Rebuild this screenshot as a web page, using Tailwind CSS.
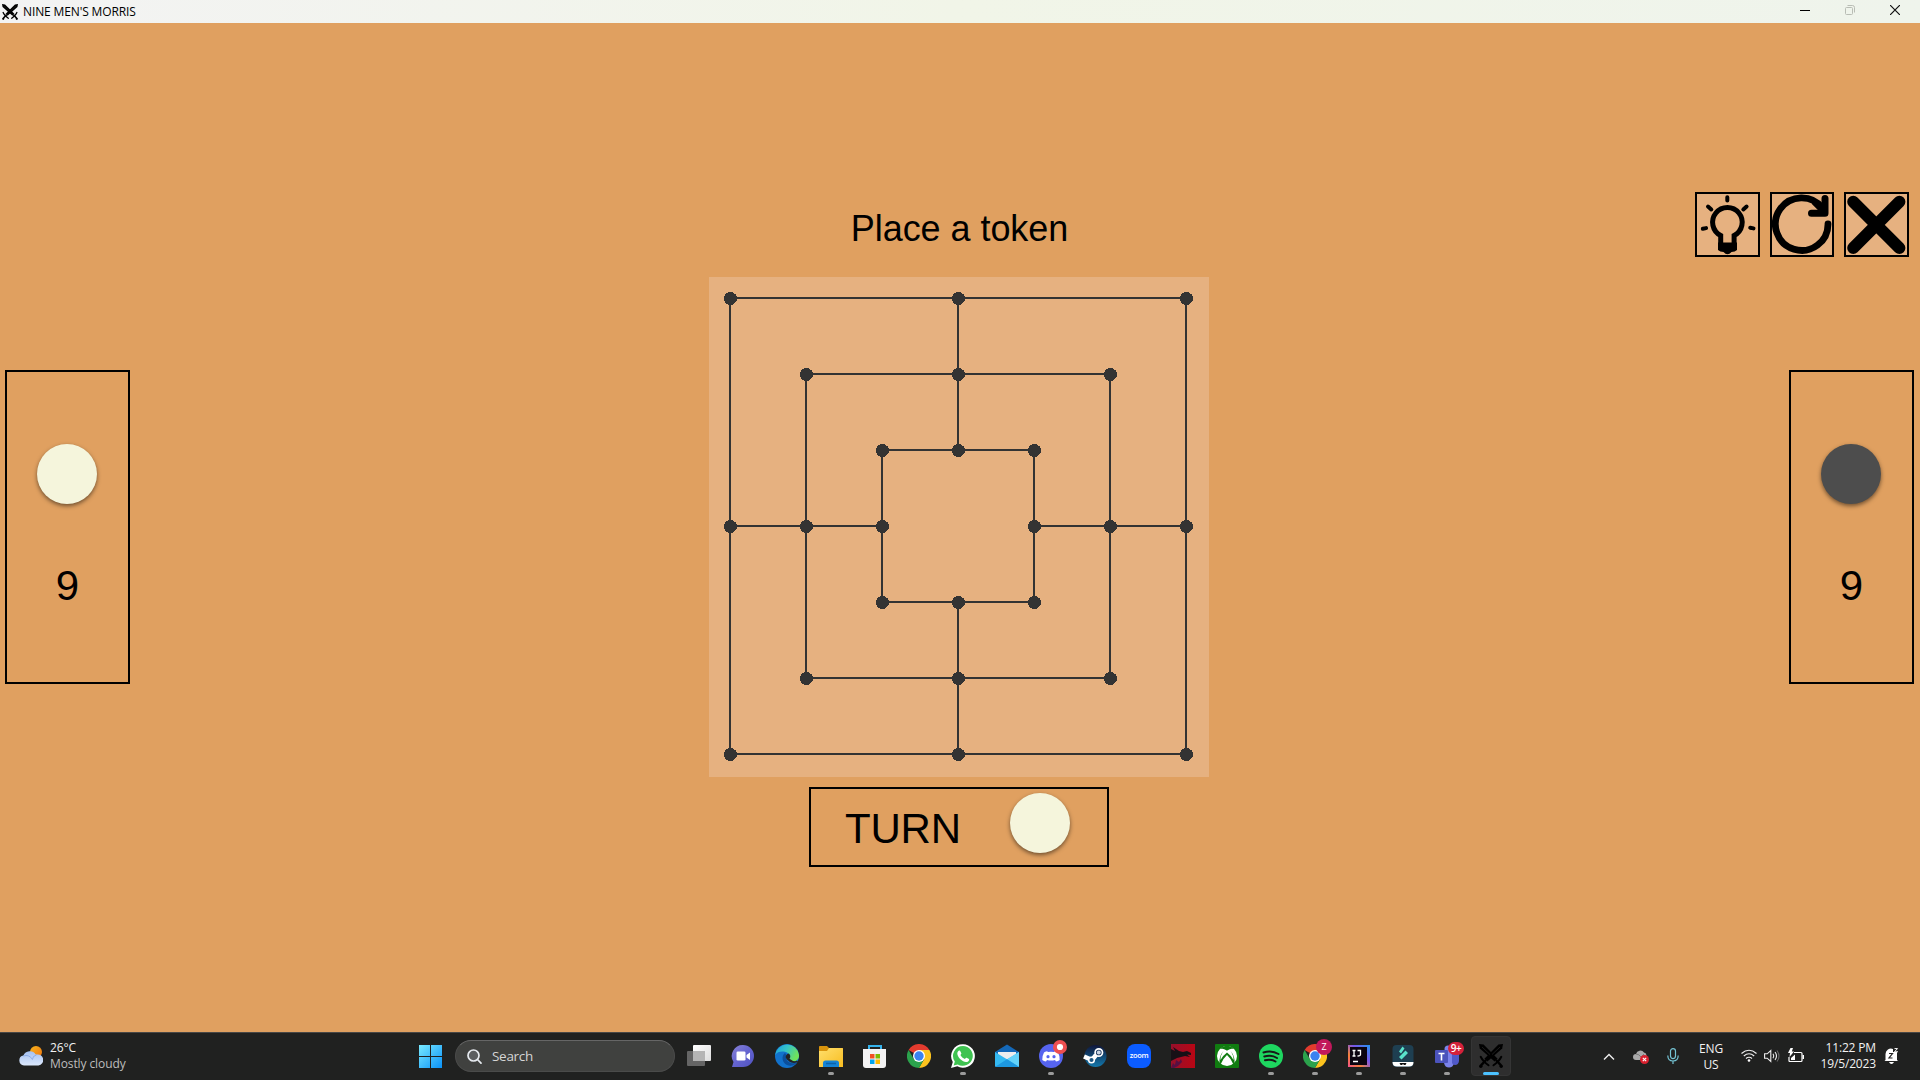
<!DOCTYPE html>
<html lang="en">
<head>
<meta charset="utf-8">
<title>Nine Men's Morris</title>
<script src="https://cdn.jsdelivr.net/npm/@tailwindcss/browser@4"></script>
</head>
<body class="w-[1920px] h-[1080px] overflow-hidden flex flex-col bg-[#e0a060] text-black font-['Liberation_Sans',Arial,sans-serif]">
<svg class="hidden">
  <defs>
    <g id="sword">
      <path d="M0 0l4.600.6L18.600 14.800l-3 2.800L.8 4.600z"/>
      <path d="M22.300 12.800q-1.200 2.400-3.200 4.600-2.200 2.200-4.600 3.900" fill="none" stroke="#000" stroke-width="2" stroke-linecap="round"/>
      <path d="M17 16l5 5.400" stroke="#000" stroke-width="2.400"/>
      <circle cx="22.200" cy="22.200" r="1.700"/>
    </g>
    <symbol id="swords" viewBox="0 0 24 24">
      <use href="#sword"/>
      <use href="#sword" transform="matrix(-1 0 0 1 24 0)"/>
      <path d="M3 3l8 7.500M21 3l-8 7.500" stroke="#666" stroke-width=".5" opacity=".6"/>
    </symbol>
    <symbol id="chrome" viewBox="0 0 24 24">
      <path d="M12 12L1.600 6A12 12 0 0 1 22.400 6z" fill="#e33b2e"/>
      <path d="M12 6h10.400A12 12 0 0 1 12 24l5.200-9z" fill="#fcc31e"/>
      <path d="M1.600 6A12 12 0 0 0 12 24l5.200-9L12 12 6.800 15z" fill="#2ba24c"/>
      <circle cx="12" cy="12" r="6" fill="#fff"/>
      <circle cx="12" cy="12" r="4.700" fill="#3b82f0"/>
    </symbol>
  </defs>
</svg>

<header class="h-[23px] shrink-0 flex items-center justify-between pl-0.5 bg-linear-to-r from-[#f3f3f3] via-[#f1f5e8] to-[#eff4ec]">
  <div class="flex items-center gap-[5px]">
    <svg class="size-4"><use href="#swords"/></svg>
    <span class="font-['Open_Sans','Noto_Sans',sans-serif] text-[12px] leading-4 tracking-[-0.130px]">NINE MEN'S MORRIS</span>
  </div>
  <div class="flex items-center pr-5 pb-[3px] gap-[35px]">
    <svg class="w-2.5 h-2.5" viewBox="0 0 10 10"><path d="M0 5.500h10" stroke="#000"/></svg>
    <svg class="w-2.5 h-2.5" viewBox="0 0 10 10" fill="none" stroke="#b9bdb5"><rect x=".5" y="2.500" width="7" height="7" rx="1"/><path d="M2.500.5h5a2 2 0 0 1 2 2v5"/></svg>
    <svg class="w-2.5 h-2.5" viewBox="0 0 10 10"><path d="M0 0l10 10M10 0L0 10" stroke="#111" stroke-width="1.200"/></svg>
  </div>
</header>

<main class="h-[1009px] shrink-0 flex justify-between">
  <aside class="w-[280px] pl-[5px] pt-[347px]">
    <div class="w-[125px] h-[314px] border-2 border-black flex flex-col items-center pt-[72px] pr-px">
      <div class="size-[60px] rounded-full bg-[#f5f5dc] shadow-[0_2px_4px_rgba(0,0,0,0.5)]"></div>
      <div class="mt-[58px] pl-px text-[42px] leading-[48px]">9</div>
    </div>
  </aside>

  <section class="w-[500px] pt-[169px] -ml-[2px] flex flex-col items-center">
    <h1 class="h-[85px] pt-4 pl-px text-[36px] leading-[42px] tracking-[-0.050px]">Place a token</h1>
    <svg class="w-[500px] h-[500px] shrink-0 bg-[#e6b180]" viewBox="0 0 500 500" shape-rendering="crispEdges">
      <g fill="none" stroke="#333" stroke-width="2">
        <rect x="21" y="21" width="456" height="456"/>
        <rect x="97" y="97" width="304" height="304"/>
        <rect x="173" y="173" width="152" height="152"/>
        <path d="M249 21v152M249 325v152M21 249h152M325 249h152"/>
      </g>
      <g id="nodes" fill="#333"></g>
    </svg>
    <div class="mt-2.5 w-[300px] h-20 shrink-0 border-2 border-black flex justify-between pl-[34px] pr-[37px]">
      <span class="mt-4 text-[42px] leading-[48px] tracking-[-0.200px]">TURN</span>
      <div class="mt-1 size-[60px] rounded-full bg-[#f5f5dc] shadow-[0_2px_4px_rgba(0,0,0,0.5)]"></div>
    </div>
  </section>

  <aside class="w-[280px] flex flex-col items-end pt-[169px]">
    <div class="flex gap-2.5 pr-[11px] h-[65px]">
      <button class="w-[65px] border-2 border-black bg-[#e6b180]">
        <svg class="size-[61px]" viewBox="0 0 61 61">
          <g stroke="#000" stroke-width="4" stroke-linecap="round" fill="none">
            <path d="M30.300 3.300v3.200M11 12.500l3.300 3M49.600 12.500l-3.300 3M5.800 34.800l3.300-.7M56.500 34.400l-3.300-.7"/>
          </g>
          <path d="M23.700 50V41.500A14.800 14.800 0 1 1 37.100 41.500V50" fill="none" stroke="#000" stroke-width="5"/>
          <path d="M21 48.500h19v7.500q-2 2-5.500 2-4 4.500-8 0-3.500 0-5.500-2z"/>
        </svg>
      </button>
      <button class="w-16 border-2 border-black bg-[#e6b180]">
        <svg class="w-[60px] h-[61px]" viewBox="0 0 60 61" fill="none" stroke="#000" stroke-linejoin="round" stroke-linecap="round">
          <path d="M56 29.800A26.300 26.300 0 1 1 50.500 14" stroke-width="6.800"/>
          <path d="M53 4.500v14.800H39.500" stroke-width="7"/>
          <path d="M43 9l9 9" stroke-width="6"/>
        </svg>
      </button>
      <button class="w-[65px] border-2 border-black bg-[#e6b180]">
        <svg class="size-[61px]" viewBox="0 0 61 61"><path d="M7.200 7.700l46.200 46.200M53.400 7.700L7.200 53.900" stroke="#000" stroke-width="12" stroke-linecap="round"/></svg>
      </button>
    </div>
    <div class="mt-[113px] mr-1.5 w-[125px] h-[314px] border-2 border-black flex flex-col items-center pt-[72px] pl-px pr-[2px]">
      <div class="size-[60px] rounded-full bg-[#4d4d4d] shadow-[0_2px_4px_rgba(0,0,0,0.5)]"></div>
      <div class="mt-[58px] pl-px text-[42px] leading-[48px]">9</div>
    </div>
  </aside>
</main>

<footer class="h-12 shrink-0 flex bg-[#202120] border-t border-[#484746] text-[#f2f2f2] font-['Open_Sans','Noto_Sans',sans-serif]">
  <div class="w-[419px] pl-[19px] flex gap-[7px]">
    <svg class="mt-3 w-6 h-6" viewBox="0 0 24 24">
      <defs><linearGradient id="cl" x2="0" y2="1"><stop stop-color="#a4c1f2"/><stop offset="1" stop-color="#dce8fb"/></linearGradient><linearGradient id="su" x2="1" y2="1"><stop stop-color="#f8b51c"/><stop offset="1" stop-color="#ee7310"/></linearGradient></defs>
      <circle cx="17" cy="7" r="6" fill="url(#su)"/>
      <path d="M5 20.500a5 5 0 0 1-.6-9.900A7 7 0 0 1 16.700 9.500a6 6 0 0 1 1.300 0 5.500 5.500 0 0 1 1.500 11z" fill="url(#cl)"/>
      <path d="M4.400 11a7 7 0 0 1 9 3.500 5 5 0 0 1 4-4.500" fill="none" stroke="#86a8e6" stroke-width=".9"/>
    </svg>
    <div class="pt-[7px] text-[12px] leading-4 tracking-[-0.100px]"><div>26°C</div><div class="text-[#bdbdbd]">Mostly cloudy</div></div>
  </div>
  <svg class="mt-3 w-[23px] h-[23px]" viewBox="0 0 23 23"><defs><linearGradient id="win" x2="1" y2="1"><stop stop-color="#79eaff"/><stop offset="1" stop-color="#0a91f7"/></linearGradient></defs><path fill="url(#win)" d="M0 0h11v11H0zM12 0h11v11H12zM0 12h11v11H0zM12 12h11v11H12z"/></svg>
  <div class="ml-[13px] mt-[7px] w-[220px] h-8 rounded-full bg-[#40413f] border border-[#4a4b4a] border-t-[#666] flex items-center gap-2.5 pl-[11px]">
    <svg class="size-[15px]" viewBox="0 0 15 15" fill="none" stroke="#e6eaef" stroke-width="1.700" stroke-linecap="round"><circle cx="6.500" cy="6.500" r="5.500" fill="#5b5e60"/><path d="M10.500 10.500l3.500 3.700"/></svg>
    <span class="text-[13.500px] leading-5 tracking-[-0.300px] text-[#d5d5d5]">Search</span>
  </div>

  <nav class="ml-0.5 flex [&>div]:w-11 [&>div]:h-[47px] [&>div]:flex [&>div]:flex-col [&>div]:items-center [&>div]:pt-[11px] [&>div]:relative [&_i]:mt-1 [&_i]:w-1.5 [&_i]:h-[3px] [&_i]:rounded-full [&_i]:bg-[#9b9b9b]">
    <div><svg class="size-6" viewBox="0 0 24 24"><defs><linearGradient id="tv" x2="1" y2="1"><stop stop-color="#fff"/><stop offset="1" stop-color="#ddd"/></linearGradient></defs><rect y="7" width="18" height="15" rx="1" fill="#656565"/><rect x="6" y="1" width="18" height="16" rx="1" fill="url(#tv)"/><path d="M6 7h12v10H6z" fill="#b5b5b5"/></svg></div>
    <div><svg class="size-6" viewBox="0 0 24 24"><defs><linearGradient id="ch" x2="1" y2="1"><stop stop-color="#8a83d6"/><stop offset=".5" stop-color="#6464d0"/><stop offset="1" stop-color="#5052c0"/></linearGradient></defs><path d="M12 1a11 11 0 1 1 0 22H1l1.500-5A11 11 0 0 1 12 1z" fill="url(#ch)"/><rect x="5.500" y="7.500" width="9" height="9" rx="1.300" fill="#fff"/><path d="M15.500 11l3.500-2.500v7.500l-3.500-2.500z" fill="#fff"/></svg></div>
    <div><svg class="size-6" viewBox="0 0 24 24"><defs><linearGradient id="eg" x2="1" y2=".4"><stop stop-color="#1a9fe0"/><stop offset=".5" stop-color="#35c3c8"/><stop offset="1" stop-color="#6fe25b"/></linearGradient></defs><circle cx="12" cy="12" r="12" fill="#1272cc"/><path d="M.2 11A12 12 0 0 1 24 11c.3 4-2.500 6.300-6 6.300-3 0-4.600-1.300-4-2.500 1.700-2.300.5-6-4-7C6 7 2 8 .2 11z" fill="url(#eg)"/><path d="M10 9c-4 3-3 9.500 2 12 3.500 1.700 7.500.5 10-2.500-3 1.200-6.500 1-9-1-2.300-2-2.400-4.500-1-6z" fill="#0c4f9b"/><path d="M14.500 14.800c1.500-2 .8-4.300-.8-5.300-2 .5-3 2-3 3.800 1 3.400 4.500 5.300 8.500 4.400" fill="#242424"/><path d="M14.200 15c.7 2 4 3 7.500 1.800l1.800 1c-2.500 1.500-7 1.700-9.800-.7z" fill="#242424"/></svg></div>
    <div><svg class="size-6" viewBox="0 0 24 24"><defs><linearGradient id="fo" x2="1" y2="1"><stop stop-color="#ffdf6c"/><stop offset="1" stop-color="#f8bd20"/></linearGradient></defs><path d="M0 2.500Q0 2 1 2h7l2 2h14v5H0z" fill="#d9940c"/><path d="M0 7h8l2-3h13q1 0 1 1v18H0z" fill="url(#fo)"/><path d="M4 23v-4q0-2.500 2.500-2.500h11Q20 16.500 20 19v4z" fill="#1583d4"/><path d="M7 19.500h10" stroke="#0d62a8" stroke-width="1.500"/></svg><i></i></div>
    <div><svg class="size-6" viewBox="0 0 24 24"><path d="M6 6V2h12v4" fill="none" stroke="#35b3ec" stroke-width="2"/><path d="M0 5h23v16q0 3-3 3H3q-3 0-3-3z" fill="#f3f3f3"/><path d="M7 10h4.500v4.500H7z" fill="#f25022"/><path d="M12.500 10H17v4.500h-4.500z" fill="#7fba00"/><path d="M7 15.500h4.500V20H7z" fill="#00a4ef"/><path d="M12.500 15.500H17V20h-4.500z" fill="#ffb900"/></svg></div>
    <div><svg class="size-6"><use href="#chrome"/></svg></div>
    <div><svg class="size-6" viewBox="0 0 24 24"><path d="M12 .2a11.800 11.800 0 1 1-5.700 22.100L0 24l1.800-6A11.800 11.800 0 0 1 12 .2z" fill="#fff"/><path d="M12 2a9.900 9.900 0 1 1-5.200 18.400L2.700 21.500l1.100-4A9.900 9.900 0 0 1 12 2z" fill="#3fc351"/><path d="M8.500 6.500c.5 0 .7.200 1.800 2.800.2.600-.2 1-.9 1.800 1 2 2.500 3.200 4.500 4 .9-1.200 1.200-1.600 1.700-1.400l2.400 1.200c.4.300 0 3.200-3 3.200-3.500-.2-8.500-4.500-8.700-8.500 0-1.400 1-3 2.200-3.100z" fill="#fff"/></svg><i></i></div>
    <div><svg class="size-6" viewBox="0 0 24 24"><path d="M0 8l12-7.500L24 8v4H0z" fill="#1468b8"/><path d="M3 8h18v6l-9 2-9-3z" fill="#eee"/><path d="M0 8l24 14.500H0z" fill="#35b9f1"/><path d="M24 8v15H0z" fill="#2aaeea"/><path d="M12 15.300L24 8v15z" fill="#63d3fa"/><path d="M0 23l12-7.700L24 23z" fill="#1d98e0"/></svg></div>
    <div><svg class="size-6" viewBox="0 0 24 24"><circle cx="12" cy="12" r="12" fill="#5664ef"/><path d="M8 7.200l1 .8q3-.6 6 0l1-.8q2 .4 3 1.300 2 3.500 1.700 7.500-1.500 1.300-3.700 1.600l-1-1.600q-4 1-8 0l-1 1.600q-2.200-.3-3.700-1.600Q3 12 5 8.500q1-.9 3-1.300z" fill="#fff"/><circle cx="9" cy="12.700" r="1.600" fill="#5664ef"/><circle cx="15" cy="12.700" r="1.600" fill="#5664ef"/></svg><i></i><svg class="absolute left-[24px] top-[7px] size-3.5" viewBox="0 0 14 14"><circle cx="7" cy="7" r="7" fill="#ee4f50"/><circle cx="7" cy="7" r="3.100" fill="#fff"/></svg></div>
    <div><svg class="size-6" viewBox="0 0 24 24"><defs><linearGradient id="st" x2="0" y2="1"><stop stop-color="#10163a"/><stop offset="1" stop-color="#1378ab"/></linearGradient></defs><circle cx="12.500" cy="12" r="11" fill="url(#st)"/><path d="M1 12.500l8 3.500 4-5" stroke="#fff" stroke-width="4.500" fill="none"/><circle cx="15.800" cy="8.500" r="3.700" fill="#17345d" stroke="#fff" stroke-width="1.700"/><circle cx="15.800" cy="8.500" r="2" fill="#ccd8e5"/><circle cx="8.500" cy="16" r="2.800" fill="#1c5683" stroke="#fff" stroke-width="1.500"/></svg></div>
    <div><div class="size-6 rounded-[8px] bg-[#0b5cff] text-white text-[7.500px] leading-[22px] text-center font-semibold tracking-[-0.400px]">zoom</div></div>
    <div><svg class="size-6" viewBox="0 0 24 24"><defs><linearGradient id="dr" x2="1" y2="0"><stop stop-color="#96102b"/><stop offset="1" stop-color="#b90614"/></linearGradient></defs><path d="M0 0h24v24H0z" fill="url(#dr)"/><path d="M0 5l4 2-2-4 6 4 4 1 4-1 4 2v2l-4-.5 3 2.500-5-1-4 1-4 1-6 3z" fill="#171016"/><path d="M0 24l2-5 2 2 1-5 3 2 2-3 1 3-4 4-4 2z" fill="#561043"/></svg></div>
    <div><svg class="size-6" viewBox="0 0 24 24"><rect width="24" height="24" rx="1" fill="#107c10"/><circle cx="12" cy="12" r="10" fill="#fff"/><path d="M5 4.800C8 4 12 6.600 12 6.600s4-2.600 7-1.800c-2-2.500-5-2.900-7-2.900s-5 .4-7 2.900z" fill="#107c10"/><path d="M8.500 7Q4 12 4.500 19l1.200 1.200Q8 14.500 12 11q4 3.500 6.300 9.200L19.500 19Q20 12 15.500 7 19 12 18.500 16 16 11.500 12 8.600 8 11.500 5.500 16 5 12 8.500 7z" fill="#107c10"/></svg></div>
    <div><svg class="size-6" viewBox="0 0 24 24"><circle cx="12" cy="12" r="12" fill="#1ed760"/><path d="M4.500 8.500c5-1.500 10.500-1 15 1.500M5.300 12.500c4.500-1.200 9-.7 12.700 1.500M6 16.200c3.800-.9 7.500-.5 10.500 1.300" fill="none" stroke="#181818" stroke-width="2" stroke-linecap="round"/></svg><i></i></div>
    <div><svg class="size-6"><use href="#chrome"/></svg><i></i><span class="absolute left-[23px] top-[6px] size-4 rounded-full bg-[#c2185b] text-[9px] leading-4 text-center text-white">Z</span></div>
    <div><svg class="size-6" viewBox="0 0 24 24"><defs><linearGradient id="ij" x1="0" y1="1" x2="1" y2="0"><stop stop-color="#f6518c"/><stop offset=".3" stop-color="#f58238"/><stop offset=".6" stop-color="#7a55e8"/><stop offset="1" stop-color="#2196f3"/></linearGradient></defs><path d="M1 1h22v22H1z" fill="url(#ij)"/><path d="M3 3h17v18H3z" fill="#0b0410"/><path d="M5.500 6.500h3M7 6.500v5.500M5.500 12h3M10.500 6.500h3v4q0 1.500-3 1.500M6 17.500h5" fill="none" stroke="#fff" stroke-width="1.300"/></svg><i></i></div>
    <div><svg class="size-6" viewBox="0 0 24 24"><rect x="1.500" y="1" width="21" height="22" rx="4" fill="#1e3f51"/><path d="M8 7.500l3.500-5 2 2-3.500 5zM8 13l6.500-6.500 2.500 2.500-6.500 6.500z" fill="#59e3cb"/><path d="M1.500 18h21q0 4.500-4.500 4.500H6q-4.500 0-4.500-4.500z" fill="#fff"/><path d="M8.500 19h7l-1 2h-1.500l-1-1-1 1h-1.500z" fill="#111"/></svg><i></i></div>
    <div><svg class="size-6" viewBox="0 0 24 24"><circle cx="13" cy="5" r="3.500" fill="#7b83eb"/><path d="M9 8h10v11q-1 4.500-5 4.500T9 19z" fill="#7b83eb"/><path d="M17 10h7v7q-.5 4-4 4-2.500 0-3-2z" fill="#5059c9"/><rect y="6" width="13" height="13" rx="1" fill="#4b53bc"/><path d="M3.500 9.500h6M6.500 9.500v7" stroke="#fff" stroke-width="1.600"/></svg><i></i><span class="absolute left-[23px] top-[9px] w-4 h-[13px] rounded-full bg-[#d5213a] text-[10px] leading-[13px] text-center text-white font-semibold tracking-[-0.500px]">9+</span></div>
    <div><span class="absolute left-0.5 top-[3px] w-10 h-10 rounded bg-[#2e2e2e] border border-[#353535]"></span><svg class="size-6 relative"><use href="#swords"/></svg><b class="relative mt-1 w-4 h-[3px] rounded-full bg-[#4cc2ff]"></b></div>
  </nav>

  <div class="ml-auto flex text-[12px] leading-4 tracking-[-0.150px]">
    <svg class="mt-[18px] w-3 h-3" viewBox="0 0 12 12"><path d="M1 8.500l5-5 5 5" fill="none" stroke="#eee" stroke-width="1.400"/></svg>
    <svg class="ml-[18px] mt-[17px] w-4 h-[14px]" viewBox="0 0 16 14"><path d="M3 10a3 3 0 0 1 0-6 4.500 4.500 0 0 1 8-1.500q2.500.5 2.500 3V10z" fill="#aaa"/><path d="M3 4q3 0 5 3l3-3" stroke="#777" fill="none"/><circle cx="11.500" cy="9.500" r="4.500" fill="#d8202e"/><path d="M9.800 7.800l3.400 3.400M13.200 7.800l-3.400 3.400" stroke="#fff" stroke-width="1.100"/></svg>
    <svg class="ml-[18px] mt-[15px] w-3 h-4" viewBox="0 0 12 16" fill="none" stroke="#75c4d4" stroke-width="1.200"><rect x="3.500" y=".6" width="5" height="10" rx="2.500"/><path d="M.8 7.500q0 5.500 5.200 5.500t5.200-5.500M6 13v3"/></svg>
    <div class="ml-5 w-6 pt-2 flex flex-col items-center"><span>ENG</span><span>US</span></div>
    <svg class="ml-[18px] mt-[16px] w-4 h-3.5" viewBox="0 0 16 14" fill="none" stroke="#f0f0f0" stroke-width="1.200"><path d="M.5 4.500q7.500-6.500 15 0M2.800 7q5.200-4.500 10.400 0M5 9.500q3-2.500 6 0"/><circle cx="8" cy="11.500" r="1.300" fill="#fff" stroke="none"/></svg>
    <svg class="ml-[7px] mt-[16px] w-4 h-3.5" viewBox="0 0 16 14" fill="none" stroke="#f0f0f0" stroke-width="1.100"><path d="M.6 4.800h2.600L6.800 1.500v11L3.200 9.200H.6z"/><path d="M9 4.800q1.600 2.200 0 4.400M11 3q3 4 0 8"/><path d="M13 1.500q4 5.500 0 11" stroke="#666"/></svg>
    <svg class="ml-2 mt-[15px] w-4 h-4" viewBox="0 0 16 16"><path d="M6 4.500h7q1 0 1 1v7q0 1-1 1H2q-1 0-1-1V9" fill="none" stroke="#fff" stroke-width="1.200"/><path d="M14.500 7h1.500v4h-1.500zM3 10l4-3.500V12H3z" fill="#fff"/><path d="M2.500 0L0 5h2l-.5 4L6 3.500H3.800L5 0z" fill="#fff"/></svg>
    <div class="ml-4 w-14 pt-[7px] flex flex-col items-end whitespace-nowrap"><span>11:22 PM</span><span>19/5/2023</span></div>
    <svg class="ml-2 mr-[21px] mt-[15px] w-[15px] h-4" viewBox="0 0 15 16"><path d="M1.500 12V6a5.500 5.500 0 0 1 7.500-5v3h4v8l1 1H.5zM5 14h5q-1 2-2.500 2T5 14z" fill="#fff"/><path d="M5 5.500h3.500L5 10h3.500" fill="none" stroke="#222" stroke-width="1.200"/><path d="M10.500.6h3l-3 3.200h3.500" fill="none" stroke="#fff"/></svg>
  </div>
</footer>

<script>
  // Every intersection of the three rings, except the middle of the board, holds a node.
  const nodes = document.getElementById('nodes');
  for (const d of [228, 152, 76])
    for (const sx of [-1, 0, 1])
      for (const sy of [-1, 0, 1]) {
        if (!sx && !sy) continue;
        const c = document.createElementNS('http://www.w3.org/2000/svg', 'circle');
        c.setAttribute('cx', 249.5 + d * sx);
        c.setAttribute('cy', 249.5 + d * sy);
        c.setAttribute('r', 6.5);
        nodes.appendChild(c);
      }
</script>
</body>
</html>
